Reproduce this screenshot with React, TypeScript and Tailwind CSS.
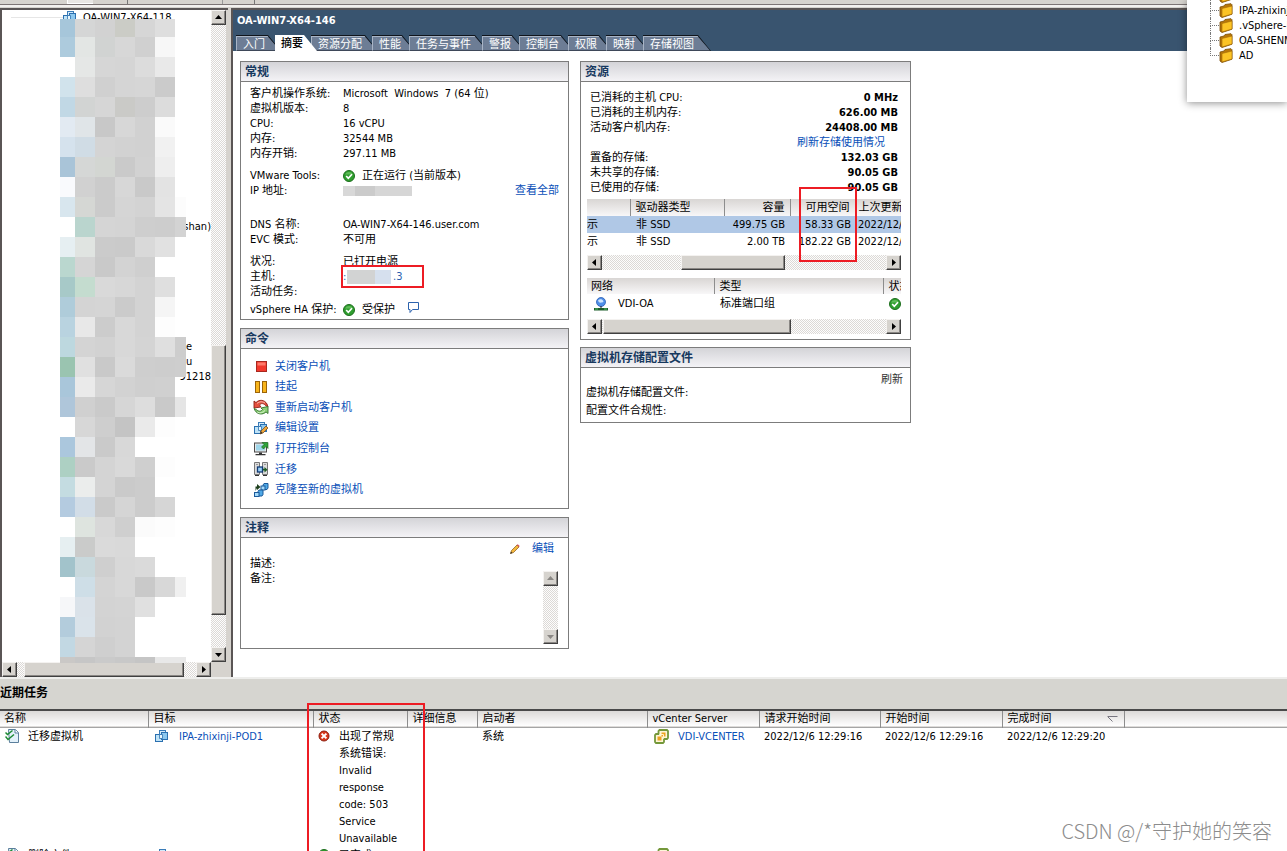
import type { ReactNode } from "react";
import clsx from "clsx";

/* ---------- icons ---------- */

function IconVm({ pencil = false }: { pencil?: boolean }) {
  return (
    <svg className="h-[14px] w-[14px] shrink-0" viewBox="0 0 14 14" aria-hidden>
      <rect x="4.5" y="1.5" width="6" height="6" fill="#d3eafa" stroke="#3a7cb8" />
      <rect x="0.5" y="5.5" width="7" height="7" fill="#bfe3f7" stroke="#2b70b0" />
      <rect x="6.5" y="3.5" width="6" height="7" fill="#8cc8ef" stroke="#2b70b0" />
      <path d="M4.500 5.500h3v4h-3z" fill="#e8f6fd" stroke="#2b70b0" strokeWidth="0.800" />
      {pencil && (
        <>
          <path d="M6 13l1-3 5-5 2 2-5 5z" fill="#eda53a" stroke="#6e4212" strokeWidth="0.7" />
          <path d="M6 13l1-2.6 1.5 1.4z" fill="#333" />
        </>
      )}
    </svg>
  );
}

function IconOk() {
  return (
    <svg className="h-[12px] w-[12px] shrink-0" viewBox="0 0 12 12" aria-hidden>
      <circle cx="6" cy="6" r="5.5" fill="#2f9e2f" stroke="#1d6e1d" />
      <path d="M2 4.5a4.5 4.5 0 0 1 8 0" fill="#7fcf73" opacity="0.6" />
      <path d="M3.2 6l2.1 2.3L9 4.2" fill="none" stroke="#fff" strokeWidth="1.7" />
    </svg>
  );
}

function IconError() {
  return (
    <svg className="h-[12px] w-[12px] shrink-0" viewBox="0 0 12 12" aria-hidden>
      <circle cx="6" cy="6" r="5" fill="#d8391c" stroke="#8d1c0d" />
      <path d="M3.6 3.6l4.8 4.8M8.4 3.6L3.6 8.4" stroke="#fff" strokeWidth="2" />
    </svg>
  );
}

function IconBubble() {
  return (
    <svg className="h-[11px] w-[11px] shrink-0" viewBox="0 0 11 11" aria-hidden>
      <path d="M0.5 0.5h10v7h-6l-2.500 3v-3h-1.500z" fill="#fff" stroke="#2c62ad" />
    </svg>
  );
}

function IconStop() {
  return (
    <svg className="h-[14px] w-[16px]" viewBox="0 0 16 14" aria-hidden>
      <rect x="3.5" y="2.5" width="10" height="10" fill="#f2382c" stroke="#a8281f" />
      <path d="M4.5 3.5h8v3h-8z" fill="#ff7a6a" />
    </svg>
  );
}

function IconPause() {
  return (
    <svg className="h-[14px] w-[16px]" viewBox="0 0 16 14" aria-hidden>
      <rect x="2.5" y="1.5" width="4" height="11" fill="#f8b51c" stroke="#9c6408" />
      <rect x="9.5" y="1.5" width="4" height="11" fill="#f8b51c" stroke="#9c6408" />
    </svg>
  );
}

function IconRestart() {
  return (
    <svg className="h-[16px] w-[16px]" viewBox="0 0 16 16" aria-hidden>
      <path
        d="M1 9V2l2 1.600C6 0.300 11.500 0.500 14 5l1 3-2.500-1.500C10.500 4 8 4 6.500 6L8 8z"
        fill="#e4503e"
        stroke="#8c1f16"
        strokeWidth="0.900"
      />
      <path d="M4 4.500C6.500 2.300 9.500 2.300 12 4" fill="none" stroke="#f9b3a8" />
      <path
        d="M15 7.500v7l-2-1.600C10 16 4.500 15.700 2 11.500L1 9.500l2.500 1.200C5.500 12.700 8 12.700 9.500 10.500L8 9z"
        fill="#8ed077"
        stroke="#2f6f28"
        strokeWidth="0.900"
      />
      <path d="M4.500 13.200C7 14.400 9.500 14 12 11.500" fill="none" stroke="#d3f2c6" />
    </svg>
  );
}

function IconConsole() {
  return (
    <svg className="h-[14px] w-[16px]" viewBox="0 0 16 14" aria-hidden>
      <rect x="1.500" y="1" width="12" height="9" fill="#e9e9e9" stroke="#4b4b4b" />
      <rect x="3" y="2.500" width="9" height="6" fill="#9fd6ea" />
      <path d="M9 0.500h6v6l-2-2-2.500 2.500-2-2L11 2.500z" fill="#2fa23a" stroke="#17611f" strokeWidth="0.600" />
      <path d="M6 10.500h3V12h3.500v1.300h-10V12H6z" fill="#333" />
    </svg>
  );
}

function IconMigrate() {
  return (
    <svg className="h-[14px] w-[16px]" viewBox="0 0 16 14" aria-hidden>
      <path d="M1.500 0.500h5v12h-5zM9.500 0.500h5v12h-5z" fill="#dcdcdc" stroke="#777" />
      <path d="M3 2.500h2M11 2.500h2" stroke="#999" />
      <rect x="4.500" y="5" width="5" height="5" fill="#9bd0f4" stroke="#123a75" strokeWidth="1.300" />
      <path d="M10 6.800h1.500V5l3 2.700-3 2.700V8.500H10z" fill="#1d5a22" />
      <path d="M2 13.500h4M10 13.500h4" stroke="#333" />
    </svg>
  );
}

function IconClone() {
  return (
    <svg className="h-[14px] w-[16px]" viewBox="0 0 16 14" aria-hidden>
      <path d="M10 2l1-1.500h4V5l-1 1.500h-4z" fill="#4fa8e6" stroke="#1b5a9a" />
      <rect x="8" y="3" width="4" height="4" fill="#a5dafa" stroke="#1b5a9a" />
      <path d="M5 8.500l1-1.500h4v4.500l-1 1.500H5z" fill="#4fa8e6" stroke="#1b5a9a" />
      <rect x="1.500" y="9.500" width="4.500" height="4" fill="#a5dafa" stroke="#1b5a9a" />
      <path d="M2.500 8V3.500H4V1l3.500 3L4 7V5" fill="#1d3f1d" />
    </svg>
  );
}

function IconPencil() {
  return (
    <svg className="h-[10px] w-[10px] shrink-0" viewBox="0 0 10 10" aria-hidden>
      <path d="M0.500 9.500l1-3 5.500-5.500 2 2-5.500 5.500z" fill="#f3b73c" stroke="#875617" strokeWidth="0.700" />
      <path d="M6.700 1l1-0.700 2 1.800-0.700 1z" fill="#d5525a" />
      <path d="M0.300 9.700l0.700-2 1.300 1.200z" fill="#222" />
    </svg>
  );
}

function IconNetwork() {
  return (
    <svg className="h-[14px] w-[14px] shrink-0" viewBox="0 0 14 14" aria-hidden>
      <circle cx="7" cy="5" r="4.500" fill="#4f8fe8" stroke="#2a5db5" strokeWidth="0.800" />
      <path d="M4 3.500c2-2 4-1 5 0s0 2-1 2-3 1-4-2z" fill="#cfe5fd" />
      <path d="M7 9v2" stroke="#222" />
      <path d="M0 11h14v2.500H0z" fill="#1d5c2b" />
      <path d="M1 12h3M10 12h3" stroke="#54c169" />
    </svg>
  );
}

function IconTask() {
  return (
    <svg className="h-[14px] w-[14px] shrink-0" viewBox="0 0 14 14" aria-hidden>
      <path d="M3.500 0.500h7l3 3v10h-9z" fill="#e3f1fa" stroke="#5b7f9c" />
      <path d="M10 0.500v3.500h3.500" fill="#fff" stroke="#5b7f9c" />
      <path d="M0.500 3.500l2 2 5-4M0.500 7.500l2.500 3 6-5" fill="none" stroke="#1d8a34" strokeWidth="1.500" />
    </svg>
  );
}

function IconVCenter() {
  return (
    <svg className="h-[15px] w-[15px] shrink-0" viewBox="0 0 15 15" aria-hidden>
      <path
        d="M5.500 1h7.500l1 1v7l-1 1h-3v3l-1 1H2l-1-1V6l1-1h2.500V2z"
        fill="#fdf6d8"
        stroke="#74983a"
        strokeWidth="1.800"
      />
      <path d="M7.500 3.500h4v4h-4zM3.500 7.500h4v4h-4z" fill="#eea320" />
      <path d="M5.500 6.500v-1h4v4h-1" fill="none" stroke="#fff6cf" />
    </svg>
  );
}

function IconFolder() {
  return (
    <svg className="h-[15px] w-[14px] shrink-0" viewBox="0 0 14 15" aria-hidden>
      <path d="M1 4l4-1 1-1.500L12 0.700l1 1v9.500L3 14.500l-2-1.500z" fill="#b87708" stroke="#7a4d05" strokeWidth="0.800" />
      <path d="M3 5.500l10-2.500v8L3 14z" fill="#fcc425" stroke="#a36a08" strokeWidth="0.600" />
    </svg>
  );
}

/* ---------- classic scroll bars ---------- */

const BEVEL =
  "shrink-0 border border-t-[#f4f2f0] border-l-[#f4f2f0] border-r-[#404040] border-b-[#404040] bg-[#d6d3ce] shadow-[inset_-1px_-1px_0_#8a8784]";
const TRACK = "bg-[repeating-conic-gradient(#fdfdfd_0_25%,#dcd9d6_0_50%)] bg-[length:2px_2px]";

const ARROWS = {
  up: "M3 8l3.500-4L10 8z",
  down: "M3 5l3.500 4L10 5z",
  left: "M8 3L4 6.500 8 10z",
  right: "M5 3l4 3.500L5 10z",
};

function ScrollButton({ dir, dim }: { dir: keyof typeof ARROWS; dim?: boolean }) {
  return (
    <button type="button" aria-label={dir} className={clsx("h-[15px] w-[15px]", BEVEL)}>
      <svg className="block h-[13px] w-[13px]" viewBox="0 0 13 13" aria-hidden>
        <path d={ARROWS[dir]} fill={dim ? "#8a8784" : "#000"} />
      </svg>
    </button>
  );
}

function HScroll({ before, thumb }: { before: string; thumb: string }) {
  return (
    <div className={clsx("flex h-[15px] min-w-0", TRACK)}>
      <ScrollButton dir="left" />
      <div className={before} />
      <div className={clsx(BEVEL, thumb)} />
      <div className="flex-1" />
      <ScrollButton dir="right" />
    </div>
  );
}

/* ---------- inventory tree ---------- */

const MOSAIC_X = [0, 15, 35, 55, 75, 95, 115, 126];

// one line per band of cells, "-" leaves the cell clear
const MOSAIC = [
  "a6c6da d5d6d6 d2d2d2 cbccc6 d6d6d6 dedede",
  "adcbdd e3e6e4 d1d3d2 d7d7d7 d0d0d0 f7f7f7",
  "- e5e7e6 d6d6d6 d5d5d5 dcdcdc e9e9e9",
  "d1e3ec dedede d0d0d0 d5d5d5 d6d6d6 cbcbcb",
  "c1d8e5 d2d4d3 d6d6d6 cacac7 cdcdcd dcdcdc",
  "e2eaf2 e0e5e8 c8c8c8 d7d7d7 d1d1d1 fafafa",
  "d5e2ed d0dce5 d4d4d4 d2d2d2 d1d1d1 f1f1f1",
  "a9c4d8 d5d7d6 d3d6d2 cacaca d2d2d2 eeeeee",
  "f9fafd d1d1d1 cbcbcb d7d7d7 c9c9c9 e3e3e3",
  "d8e6ee d5d7d4 cbcbcb d5d5d5 d3d3d3 e4e4e4 fcfcfc",
  "- bad5ce d5d5d5 d4d4d4 cecece cdcdcd d3d3d3",
  "e6eff2 e0e4e1 cbcbcb cacaca d9d9d9 e1e1e1",
  "bad7cf d5d5d5 c9c9c9 d3d3d3 cfcfcf -",
  "a7c9c8 c4dccf d9d9d9 d7d7d7 d3d3d3 dfdfdf",
  "afccda d4d4d4 d5d5d5 cbcbcb d3d3d3 f5f5f5",
  "b9d3e0 e8e8e8 cccccc d8d8d8 d3d3d3 fdfdfd",
  "bdd8df d4d4d4 d2d2d2 d8d8d8 d4d4d4 dfdfdf cdcdcd",
  "9ac4b0 e0e0e0 c9c9c9 dadada cecece cdcdcd cecece",
  "a9c6da eaeaea d6d6d6 d2d2d2 cfcfcf d0d0d0",
  "afc6da d0d0d0 cacaca d6d6d6 dddddd c9c9c9 e5e5e5",
  "- d7d7d7 cecece c4c4c4 eaeaea fdfdfd",
  "abc7dd e3e5e7 cacaca d8d8d8",
  "add0c3 cacaca d4d4d4 d9d9d9 cfcfcf fdfdfd",
  "c4dce1 ebedec d4d4d4 cacaca cccccc",
  "b4cbe0 d2dde7 cacaca d5d5d5 cccccc d6d6d6",
  "- dee4df d8d8d8 cfcfcf fbfbfb fdfdfd",
  "e6eff1 cacbca dadada d9d9d9",
  "a2c3cb c9d9dd cfcfcf d8d8d8 dadada",
  "- cedee7 d4d4d4 d8d8d8 c9c9c9 d8d8d8 f0f0f0",
  "f6f7f9 dae2e9 d3d3d3 d4d4d4 e0e0e0",
  "b3ccdc dae3ea d2d2d2 d3d3d3",
  "c2d8e3 d5d5d5 cfcfcf d3d3d3",
  "cac8c6 c6c6c6 cacaca c8c8c8 c5c5c5 e8e8e8 e8e8e8",
].map((row) => row.split(" "));

function Mosaic() {
  return (
    <svg
      className="absolute left-[58px] top-[9px] z-10 h-[644px] w-[126px]"
      viewBox="0 0 126 644"
      shapeRendering="crispEdges"
      aria-hidden
    >
      {MOSAIC.map((row, r) => {
        const y = r === 0 ? 0 : r * 20 - 2;
        const bottom = Math.min(r * 20 + 18, 644);
        return row.map((c, i) =>
          c === "-" ? null : (
            <rect
              key={`${r}-${i}`}
              x={MOSAIC_X[i]}
              y={y}
              width={MOSAIC_X[i + 1] - MOSAIC_X[i]}
              height={bottom - y}
              fill={`#${c}`}
            />
          ),
        );
      })}
    </svg>
  );
}

const TREE_TAILS: Record<number, string> = { 14: "shan)", 22: "e", 23: "u", 24: "91218" };

function Tree() {
  return (
    <aside className="flex w-[228px] shrink-0 flex-col border-l-2 border-t-2 border-[#5a5555] bg-[#d6d3ce] pr-[2px]">
      <div className="relative flex min-h-0 flex-1">
        <ul className="min-w-0 flex-1 bg-white">
          <li className="flex h-[14px] items-center pl-[9px]">
            <span className="w-[52px] border-t border-[#e6e6e6]" />
            <span className="flex items-center gap-[6px] leading-[13px]">
              <IconVm />
              OA-WIN7-X64-118
            </span>
          </li>
          {Array.from({ length: 24 }, (_, i) => {
            const tail = TREE_TAILS[i + 1] ?? "";
            return (
              <li key={i} className={clsx("h-[15px]", tail.length > 1 ? "text-right" : "pl-[184px]")}>
                {tail}
              </li>
            );
          })}
        </ul>
        <div className={clsx("flex w-[15px] flex-col", TRACK)}>
          <ScrollButton dir="up" />
          <div className="h-[320px]" />
          <div className={clsx("h-[270px]", BEVEL)} />
          <div className="flex-1" />
          <ScrollButton dir="down" />
        </div>
        <Mosaic />
      </div>
      <div className="pr-[15px]">
        <HScroll before="w-[7px]" thumb="w-[160px]" />
      </div>
    </aside>
  );
}

/* ---------- tabs and panels ---------- */

const TABS = [
  { label: "入门", width: "w-[45px]" },
  { label: "摘要", width: "w-[42px]" },
  { label: "资源分配", width: "w-[67px]" },
  { label: "性能", width: "w-[43px]" },
  { label: "任务与事件", width: "w-[79px]" },
  { label: "警报", width: "w-[43px]" },
  { label: "控制台", width: "w-[55px]" },
  { label: "权限", width: "w-[44px]" },
  { label: "映射", width: "w-[43px]" },
  { label: "存储视图", width: "w-[68px]" },
];

const SLANT = "[clip-path:polygon(0_0,calc(100%_-_13px)_0,100%_100%,0_100%)]";

function Tabs() {
  return (
    <div role="tablist" className="flex h-[16px] pl-[3px]">
      {TABS.map((tab, i) => {
        const active = i === 1;
        return (
          <button
            key={tab.label}
            type="button"
            role="tab"
            aria-selected={active}
            className={clsx(
              "relative -mr-[6px] h-[16px] shrink-0",
              tab.width,
              SLANT,
              active ? "z-10 bg-white" : "bg-[#10151c] pr-px",
            )}
          >
            <span
              className={clsx(
                "block h-[15px] whitespace-nowrap pl-[6px] text-left leading-[15px]",
                active
                  ? "font-medium text-black"
                  : "border-l border-t border-[#a9b5c6] bg-[#6d7d95] text-white",
                !active && SLANT,
              )}
            >
              {tab.label}
            </span>
          </button>
        );
      })}
    </div>
  );
}

function Panel({ title, children }: { title: string; children: ReactNode }) {
  return (
    <section className="border border-[#7c7c7c] bg-white">
      <h2 className="h-[20px] border-b border-[#7c7c7c] bg-linear-to-b from-[#d4d4d8] to-[#f4f3f6] pl-[4px] text-[12px] font-bold leading-[20px] text-[#17395f]">
        {title}
      </h2>
      {children}
    </section>
  );
}

function Link({ children }: { children: ReactNode }) {
  return (
    <a href="#" className="text-[#0a50b8]">
      {children}
    </a>
  );
}

function Row({ label, children }: { label: string; children?: ReactNode }) {
  return (
    <div className="flex h-[15px] items-center">
      <dt className="w-[93px] shrink-0 whitespace-nowrap">{label}</dt>
      <dd className="flex min-w-0 flex-1 items-center whitespace-nowrap">{children}</dd>
    </div>
  );
}

function GeneralPanel() {
  return (
    <Panel title="常规">
      <dl className="pb-[2px] pl-[9px] pr-[9px] pt-[4px]">
        <Row label="客户机操作系统:">Microsoft&nbsp; Windows&nbsp; 7 (64 位)</Row>
        <Row label="虚拟机版本:">8</Row>
        <Row label="CPU:">16 vCPU</Row>
        <Row label="内存:">32544 MB</Row>
        <Row label="内存开销:">297.11 MB</Row>
        <div className="mt-[7px]">
          <Row label="VMware Tools:">
            <span className="mr-[7px]">
              <IconOk />
            </span>
            正在运行 (当前版本)
          </Row>
          <Row label="IP 地址:">
            <span className="h-[10px] w-[12px] bg-[#d8d8d8]" />
            <span className="h-[10px] w-[20px] bg-[#cbcbcb]" />
            <span className="h-[10px] w-[37px] bg-[#d6d6d6]" />
            <span className="ml-auto">
              <Link>查看全部</Link>
            </span>
          </Row>
        </div>
        <div className="mt-[19px]">
          <Row label="DNS 名称:">OA-WIN7-X64-146.user.com</Row>
          <Row label="EVC 模式:">不可用</Row>
        </div>
        <div className="mt-[7px]">
          <Row label="状况:">已打开电源</Row>
          <Row label="主机:">
            <span className="relative flex items-center">
              <a href="#" className="flex items-center text-[#2a5fb0]">
                <span className="w-[4px]">:</span>
                <span className="h-[14px] w-[28px] bg-[#d2d3d3]" />
                <span className="h-[14px] w-[16px] bg-[#d6e0ee]" />
                <span className="pl-[2px]">.3</span>
              </a>
              <span className="absolute -left-[2px] -top-[4px] h-[23px] w-[83px] border-2 border-[#ed1c24]" />
            </span>
          </Row>
          <Row label="活动任务:" />
        </div>
        <div className="mt-[3px]">
          <Row label="vSphere HA 保护:">
            <span className="mr-[7px]">
              <IconOk />
            </span>
            受保护
            <span className="ml-[13px] self-start">
              <IconBubble />
            </span>
          </Row>
        </div>
      </dl>
    </Panel>
  );
}

const COMMANDS = [
  { label: "关闭客户机", icon: <IconStop /> },
  { label: "挂起", icon: <IconPause /> },
  { label: "重新启动客户机", icon: <IconRestart /> },
  { label: "编辑设置", icon: <IconVm pencil /> },
  { label: "打开控制台", icon: <IconConsole /> },
  { label: "迁移", icon: <IconMigrate /> },
  { label: "克隆至新的虚拟机", icon: <IconClone /> },
];

function CommandsPanel() {
  return (
    <Panel title="命令">
      <ul className="flex h-[159px] flex-col justify-between pb-[8px] pl-[12px] pt-[7px]">
        {COMMANDS.map((c) => (
          <li key={c.label} className="flex h-[20px] items-center gap-[6px]">
            <span className="flex w-[16px] justify-center">{c.icon}</span>
            <Link>{c.label}</Link>
          </li>
        ))}
      </ul>
    </Panel>
  );
}

function NotesPanel() {
  return (
    <Panel title="注释">
      <div className="flex items-center justify-end gap-[12px] pr-[14px] pt-[3px]">
        <IconPencil />
        <Link>编辑</Link>
      </div>
      <p className="pl-[9px]">描述:</p>
      <div className="flex pb-[4px] pl-[9px] pr-[10px]">
        <label htmlFor="notes" className="w-[31px]">
          备注:
        </label>
        <textarea id="notes" readOnly className="min-w-0 flex-1 resize-none outline-none" />
        <div className={clsx("flex h-[73px] w-[15px] flex-col justify-between", TRACK)}>
          <ScrollButton dir="up" dim />
          <ScrollButton dir="down" dim />
        </div>
      </div>
    </Panel>
  );
}

const USAGE_HOST = [
  ["已消耗的主机 CPU:", "0 MHz"],
  ["已消耗的主机内存:", "626.00 MB"],
  ["活动客户机内存:", "24408.00 MB"],
];

const USAGE_STORAGE = [
  ["置备的存储:", "132.03 GB"],
  ["未共享的存储:", "90.05 GB"],
  ["已使用的存储:", "90.05 GB"],
];

function UsageList({ rows }: { rows: string[][] }) {
  return (
    <dl>
      {rows.map(([label, value]) => (
        <div key={label} className="flex h-[15px] justify-between">
          <dt>{label}</dt>
          <dd className="font-bold">{value}</dd>
        </div>
      ))}
    </dl>
  );
}

const HEAD_ROW = "bg-linear-to-b from-[#d9d6d4] to-[#f8f7f8] text-left";
const HEAD_CELL = "overflow-hidden whitespace-nowrap border-l border-[#8d8d8d] pl-[5px] font-normal";

function ResourcesPanel() {
  return (
    <Panel title="资源">
      <div className="pb-[5px] pl-[6px] pr-[9px] pt-[8px]">
        <div className="pl-[3px] pr-[3px]">
          <UsageList rows={USAGE_HOST} />
          <p className="pr-[13px] text-right">
            <Link>刷新存储使用情况</Link>
          </p>
          <UsageList rows={USAGE_STORAGE} />
        </div>
        <div className="relative mt-[4px]">
          <table className="w-full table-fixed border-collapse">
            <colgroup>
              <col className="w-[43px]" />
              <col className="w-[94px]" />
              <col className="w-[66px]" />
              <col className="w-[65px]" />
              <col />
            </colgroup>
            <thead>
              <tr className={clsx("h-[17px]", HEAD_ROW)}>
                <th />
                <th className={HEAD_CELL}>驱动器类型</th>
                <th className={clsx(HEAD_CELL, "pr-[5px] text-right")}>容量</th>
                <th className={clsx(HEAD_CELL, "pr-[5px] text-right")}>可用空间</th>
                <th className="overflow-hidden whitespace-nowrap border-l border-[#8d8d8d] pl-[3px] font-normal">
                  上次更新
                </th>
              </tr>
            </thead>
            <tbody>
              {[
                ["示", "非 SSD", "499.75 GB", "58.33 GB", "2022/12/"],
                ["示", "非 SSD", "2.00 TB", "182.22 GB", "2022/12/"],
              ].map((r, i) => (
                <tr key={r[2]} className={clsx("h-[17px] whitespace-nowrap", i === 0 && "bg-[#b0c8e6]")}>
                  <td>{r[0]}</td>
                  <td className="pl-[6px]">{r[1]}</td>
                  <td className="pr-[5px] text-right">{r[2]}</td>
                  <td className="pr-[4px] text-right">{r[3]}</td>
                  <td className="overflow-hidden pl-[3px]">{r[4]}</td>
                </tr>
              ))}
            </tbody>
          </table>
          <span className="absolute -top-[12px] left-[212px] h-[75px] w-[58px] border-2 border-[#ed1c24]" />
        </div>
        <div className="mt-[5px]">
          <HScroll before="w-[79px]" thumb="w-[104px]" />
        </div>
        <table className="mt-[8px] w-full table-fixed border-collapse">
          <colgroup>
            <col className="w-[127px]" />
            <col className="w-[169px]" />
            <col />
          </colgroup>
          <thead>
            <tr className={clsx("h-[16px]", HEAD_ROW)}>
              <th className="pl-[4px] font-normal">网络</th>
              <th className={HEAD_CELL}>类型</th>
              <th className={HEAD_CELL}>状态</th>
            </tr>
          </thead>
          <tbody>
            <tr className="h-[19px]">
              <td className="pl-[7px]">
                <span className="flex items-center gap-[10px]">
                  <IconNetwork />
                  VDI-OA
                </span>
              </td>
              <td className="pl-[6px]">标准端口组</td>
              <td className="pl-[6px]">
                <IconOk />
              </td>
            </tr>
          </tbody>
        </table>
        <div className="mt-[6px]">
          <HScroll before="w-px" thumb="w-[188px]" />
        </div>
      </div>
    </Panel>
  );
}

function ProfilePanel() {
  return (
    <Panel title="虚拟机存储配置文件">
      <p className="flex justify-end pr-[7px] pt-[4px] text-[#333]">
        <button type="button" className="h-[12px] leading-[15px]">
          刷新
        </button>
      </p>
      <p className="pb-[2px] pl-[5px] leading-[18px]">
        虚拟机存储配置文件:
        <br />
        配置文件合规性:
      </p>
    </Panel>
  );
}

/* ---------- recent tasks ---------- */

const TASK_CELL = "px-[5px] align-top leading-[17px]";

function TaskRow({
  name,
  target,
  state,
  user,
  times,
}: {
  name: string;
  target: string;
  state: ReactNode;
  user: string;
  times: string[];
}) {
  return (
    <tr>
      <td className={TASK_CELL}>
        <span className="flex h-[17px] items-center gap-[9px]">
          <IconTask />
          {name}
        </span>
      </td>
      <td className={TASK_CELL}>
        <span className="flex h-[17px] items-center gap-[10px] pl-[2px]">
          <IconVm />
          <Link>{target}</Link>
        </span>
      </td>
      <td className={TASK_CELL}>{state}</td>
      <td />
      <td className={clsx(TASK_CELL, "whitespace-nowrap")}>{user}</td>
      <td className={TASK_CELL}>
        <span className="flex h-[17px] items-center gap-[9px] pl-[2px]">
          <IconVCenter />
          <Link>VDI-VCENTER</Link>
        </span>
      </td>
      {times.map((t, i) => (
        <td key={i} className={clsx(TASK_CELL, "whitespace-nowrap")}>
          {t}
        </td>
      ))}
      <td />
    </tr>
  );
}

function RecentTasks() {
  return (
    <section className="relative min-h-0 flex-1 overflow-hidden border-t-2 border-[#eeeeec] bg-white">
      <h2 className="h-[32px] border-b-2 border-[#4a4a4a] bg-[#d6d5d0] text-[12px] font-bold leading-[28px]">
        近期任务
      </h2>
      <table className="w-full table-fixed border-collapse">
        <colgroup>
          <col className="w-[148px]" />
          <col className="w-[165px]" />
          <col className="w-[94px]" />
          <col className="w-[70px]" />
          <col className="w-[170px]" />
          <col className="w-[112px]" />
          <col className="w-[121px]" />
          <col className="w-[122px]" />
          <col className="w-[122px]" />
          <col />
        </colgroup>
        <thead>
          <tr className="h-[16px] border-b border-[#a5a5a5] bg-linear-to-b from-[#dcdad8] to-[#ffffff] text-left">
            <th className="pl-[4px] font-normal">名称</th>
            <th className={HEAD_CELL}>目标</th>
            <th className={HEAD_CELL}>状态</th>
            <th className={HEAD_CELL}>详细信息</th>
            <th className={HEAD_CELL}>启动者</th>
            <th className={HEAD_CELL}>vCenter Server</th>
            <th className={HEAD_CELL}>请求开始时间</th>
            <th className={HEAD_CELL}>开始时间</th>
            <th className={HEAD_CELL}>
              <span className="flex items-center justify-between pr-[6px]">
                完成时间
                <svg className="h-[6px] w-[11px]" viewBox="0 0 11 6" aria-hidden>
                  <path d="M0.500 0.500h10M1 1l4.500 4.500" fill="none" stroke="#77757f" />
                </svg>
              </span>
            </th>
            <th className="border-l border-[#8d8d8d]" />
          </tr>
        </thead>
        <tbody>
          <TaskRow
            name="迁移虚拟机"
            target="IPA-zhixinji-POD1"
            state={
              <span className="flex gap-[9px]">
                <span className="flex h-[17px] items-center">
                  <IconError />
                </span>
                <span className="w-[58px]">出现了常规系统错误: Invalid response code: 503 Service Unavailable</span>
              </span>
            }
            user="系统"
            times={["2022/12/6 12:29:16", "2022/12/6 12:29:16", "2022/12/6 12:29:20"]}
          />
          <TaskRow
            name="删除文件"
            target="IPA-VDC"
            state={
              <span className="flex h-[17px] items-center gap-[9px]">
                <IconOk />
                已完成
              </span>
            }
            user="VSPHERE.LOCAL\Administrator"
            times={["2022/12/6 12:28:58", "2022/12/6 12:28:58", "2022/12/6 12:28:00"]}
          />
        </tbody>
      </table>
      <span className="absolute -bottom-[4px] left-[307px] top-[24px] w-[118px] border-2 border-[#ed1c24]" />
    </section>
  );
}

/* ---------- floating folder list ---------- */

const FOLDERS = ["", "IPA-zhixinji", ".vSphere-HA", "OA-SHENMA", "AD"];

function FolderPopup() {
  return (
    <div className="absolute right-0 top-0 z-20 h-[102px] w-[100px] overflow-hidden bg-white pl-[23px] shadow-[0_1px_8px_rgba(0,0,0,0.45)]">
      <ul className="-mt-[12px]">
        {FOLDERS.map((name, i) => (
          <li key={name} className="flex h-[15px] items-center whitespace-nowrap">
            <span className="flex h-[15px] w-[9px] shrink-0 flex-col">
              <span className="h-[8px] border-b border-l border-dotted border-[#777]" />
              {i < FOLDERS.length - 1 && <span className="flex-1 border-l border-dotted border-[#777]" />}
            </span>
            <IconFolder />
            <span className="pl-[6px]">{name}</span>
          </li>
        ))}
      </ul>
    </div>
  );
}

export default function App() {
  return (
    <div className="relative flex h-screen flex-col overflow-hidden bg-[#d6d3ce] font-['DejaVu_Sans_Condensed','Noto_Sans','Noto_Sans_CJK_SC',sans-serif] text-[11px] leading-[15px] text-black">
      <div className="flex h-[8px] shrink-0 flex-col">
        <div className="flex h-[5px] border-b border-[#7d7575]">
          <span className="ml-[67px] w-[26px] border-b border-l border-white bg-[#e9e7e4]" />
          <span className="ml-[34px] w-px bg-[#777]" />
          <span className="ml-[94px] w-px bg-[#999]" />
          <span className="ml-[31px] w-px bg-[#777]" />
        </div>
        <div className="h-[2px] bg-[#f3f1ef]" />
      </div>

      <div className="flex shrink-0">
        <Tree />
        <main className="ml-[3px] min-w-0 flex-1 border-l-2 border-t-2 border-[#5a5555] bg-white">
          <header className="bg-[#39546f]">
            <h1 className="h-[25px] pl-[4px] font-bold leading-[21px] text-white">OA-WIN7-X64-146</h1>
            <Tabs />
          </header>
          <div className="flex items-start gap-[11px] pb-[28px] pl-[7px] pt-[10px]">
            <div className="flex w-[329px] flex-col gap-[8px]">
              <GeneralPanel />
              <CommandsPanel />
              <NotesPanel />
            </div>
            <div className="flex w-[331px] flex-col gap-[7px]">
              <ResourcesPanel />
              <ProfilePanel />
            </div>
          </div>
        </main>
      </div>

      <RecentTasks />
      <FolderPopup />

      <p className="absolute bottom-[6px] right-[15px] font-['Noto_Sans_CJK_SC',sans-serif] text-[20px] font-light leading-[28px] text-[#8c8c8c]">
        CSDN @/*守护她的笑容
      </p>
    </div>
  );
}
